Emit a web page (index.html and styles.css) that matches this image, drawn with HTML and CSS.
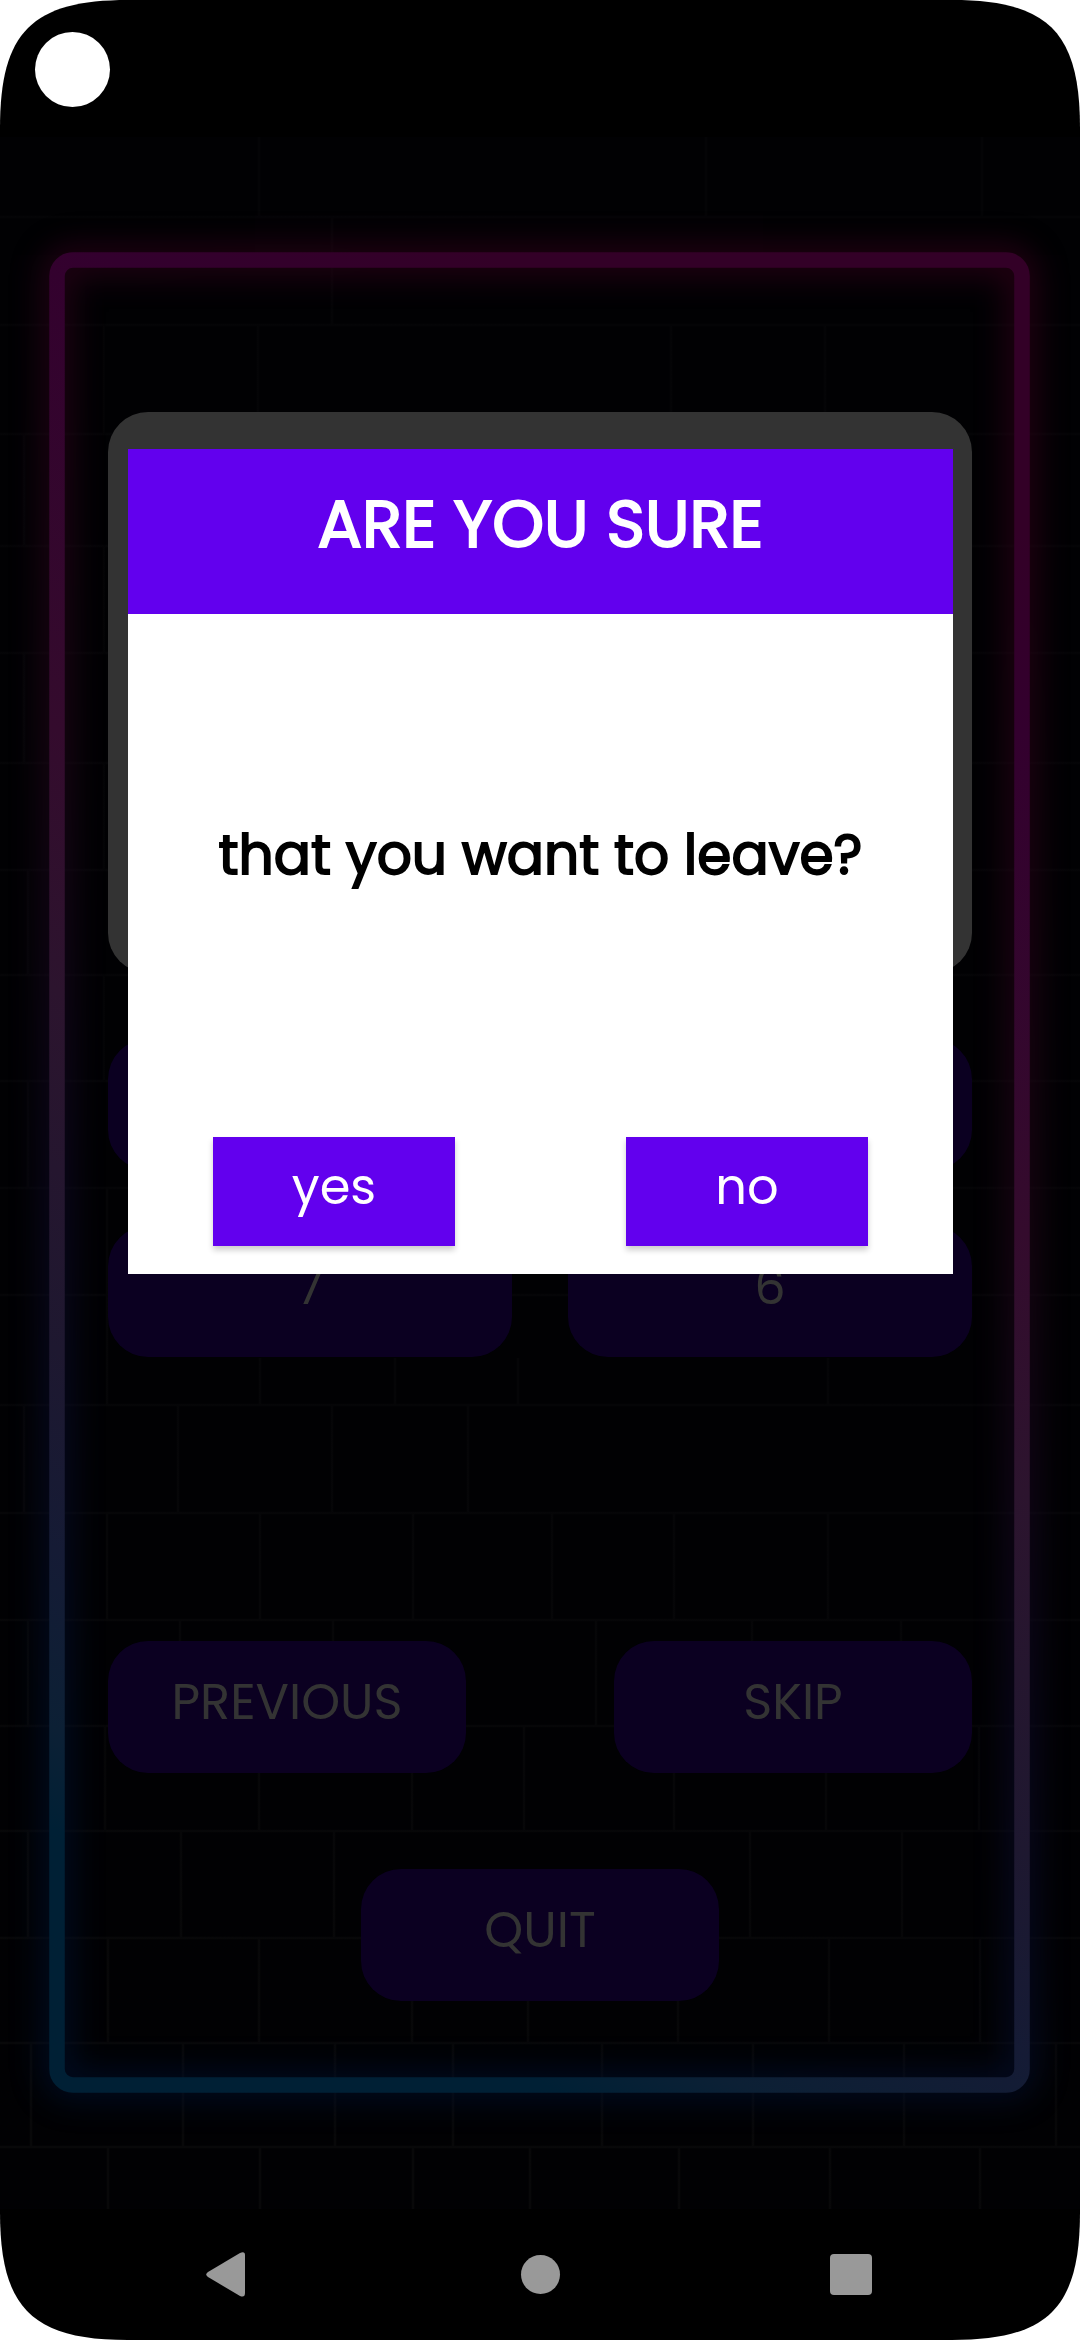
FILE: index.html
```html
<!DOCTYPE html>
<html lang="en">
<head>
<meta charset="utf-8">
<title>Quiz</title>
<link rel="stylesheet" href="styles.css">
</head>
<body>
<div class="device">
  <span class="camera"></span>
  <header class="statusbar"></header>
  <main class="screen">
    <svg class="wall" width="1080" height="2072" viewBox="0 137 1080 2072">
      <defs>
        <linearGradient id="neon" gradientUnits="userSpaceOnUse" x1="0" y1="0" x2="-819" y2="1575">
          <stop offset="0" stop-color="#330027"/>
          <stop offset=".1" stop-color="#33002e"/>
          <stop offset=".35" stop-color="#340b2d"/>
          <stop offset=".48" stop-color="#2c142e"/>
          <stop offset=".66" stop-color="#1e1830"/>
          <stop offset=".76" stop-color="#151b35"/>
          <stop offset=".85" stop-color="#0c2035"/>
          <stop offset=".9" stop-color="#002035"/>
        </linearGradient>
        <linearGradient id="aura" gradientUnits="userSpaceOnUse" x1="0" y1="0" x2="-819" y2="1575">
          <stop offset="0" stop-color="#33001a"/>
          <stop offset=".35" stop-color="#26061c"/>
          <stop offset=".6" stop-color="#0e0a2a"/>
          <stop offset=".85" stop-color="#00102e"/>
        </linearGradient>
        <linearGradient id="joint" gradientUnits="userSpaceOnUse" x1="800" y1="300" x2="200" y2="2100">
          <stop offset="0" stop-color="#040406"/>
          <stop offset=".6" stop-color="#050507"/>
          <stop offset="1" stop-color="#080809"/>
        </linearGradient>
        <filter id="glow" filterUnits="userSpaceOnUse" x="-60" y="130" width="1200" height="2090" color-interpolation-filters="sRGB"><feGaussianBlur stdDeviation="15"/></filter>
      </defs>
      <g class="mortar">
        <path d="M0 217H1080M0 325H1080M0 434H1080M0 546H1080M0 653H1080M0 763H1080M0 870H1080M0 975H1080M0 1081H1080M0 1188H1080M0 1295H1080M0 1405H1080M0 1513H1080M0 1620H1080M0 1726H1080M0 1831H1080M0 1938H1080M0 2043H1080M0 2147H1080"/>
        <path class="rows-a" d="M104 325V434M104 546V653M104 763V870M104 975V1081M107 1188V1405M107 1513V1620M105 1726V1831M108 1938V2043M108 2147V2209M176 325V325M260 137V137"/>
        <path d="M259 137V217M706 137V217M982 137V217M24 434V546M24 653V763M28 870V975M28 1081V1188M178 217V217M332 217V325"/>
        <path d="M176 325V325M258 325V434M671 325V434M825 325V434"/>
        <path d="M24 1405V1513M178 1405V1513M332 1405V1513M468 1405V1513M28 1620V1726M180 1620V1726M333 1620V1726M596 1620V1726M752 1620V1726M901 1620V1726"/>
        <path d="M260 1358V1405M395 1358V1405M518 1358V1405M828 1358V1405M260 1513V1620M413 1513V1620M552 1513V1620M674 1513V1620M828 1513V1620M259 1726V1831M412 1726V1831M524 1726V1831M674 1726V1831M826 1726V1831M979 1726V1831"/>
        <path d="M28 1831V1938M181 1831V1938M334 1831V1938M750 1831V1938M902 1831V1938M259 1938V2043M412 1938V2043M528 1938V2043M678 1938V2043M829 1938V2043M980 1938V2043"/>
        <path d="M31 2043V2147M183 2043V2147M335 2043V2147M453 2043V2147M602 2043V2147M753 2043V2147M904 2043V2147M1056 2043V2147M260 2147V2209M413 2147V2209M530 2147V2209M679 2147V2209M830 2147V2209M980 2147V2209"/>
      </g>
      <rect class="tube halo" x="57" y="260" width="965" height="1825" rx="16"/>
      <rect class="tube" x="57" y="260" width="965" height="1825" rx="16"/>
    </svg>
    <div class="quiz">
      <section class="question"></section>
      <div class="answers">
        <div class="pill"></div><div class="pill"></div>
        <div class="pill"><span>7</span></div><div class="pill"><span>6</span></div>
      </div>
      <div class="actions">
        <div class="pill"><span>PREVIOUS</span></div>
        <div class="pill"><span>SKIP</span></div>
      </div>
      <div class="exit"><div class="pill"><span>QUIT</span></div></div>
    </div>
    <div class="dialog" role="dialog">
      <h1 class="dialog-title">ARE YOU SURE</h1>
      <p class="dialog-text">that you want to leave?</p>
      <div class="dialog-buttons">
        <button>yes</button>
        <button>no</button>
      </div>
    </div>
  </main>
  <nav class="navbar">
    <svg width="1080" height="131" viewBox="0 0 1080 131" fill="#999">
      <path d="M208 63 L240 44 Q245 42 245 46 V84 Q245 89 240 87 L208 68 Q204.500 65.500 208 63Z"/>
      <circle cx="540.500" cy="65.500" r="19.500"/>
      <rect x="830" y="45" width="42" height="41" rx="4"/>
    </svg>
  </nav>
</div>
</body>
</html>
```
FILE: styles.css
```css
* { box-sizing: border-box; }
body { margin: 0; background: #fff; font-family: Poppins, Inter, sans-serif; }
h1, p { margin: 0; font-weight: 400; }
.device {
  position: relative;
  width: 1080px;
  height: 2340px;
  overflow: hidden;
  display: flex;
  flex-direction: column;
  background: #000;
  clip-path: path("M0 128C0 32 32 0 128 0H952C1048 0 1080 32 1080 128V2212C1080 2308 1048 2340 952 2340H128C32 2340 0 2308 0 2212Z");
}
.camera {
  position: absolute;
  left: 35px;
  top: 32px;
  width: 75px;
  height: 75px;
  border-radius: 50%;
  background: #fff;
}
.statusbar { height: 137px; flex: none; }
.screen { position: relative; height: 2072px; flex: none; background: #010103; }
.wall { position: absolute; left: 0; top: 0; }
.mortar { fill: none; stroke: url(#joint); stroke-width: 2.5; }
.tube { fill: none; stroke: url(#neon); stroke-width: 15.5px; }
.halo { stroke: url(#aura); stroke-width: 32px; filter: url(#glow); opacity: .65; }

.quiz { position: relative; padding: 275px 108px 0; }
.question { height: 561px; border-radius: 40px; background: #333; }
.answers {
  display: grid;
  grid-template-columns: 404px 404px;
  justify-content: space-between;
  row-gap: 56px;
  margin-top: 66px;
}
.pill {
  display: flex;
  align-items: center;
  justify-content: center;
  height: 132px;
  padding-bottom: 10px;
  border-radius: 40px;
  background: #0b0021;
  color: #333;
  font-size: 49.5px;
  line-height: 1;
}
.answers .pill { height: 131px; }
.actions { display: flex; justify-content: space-between; margin-top: 284px; }
.actions .pill, .exit .pill { width: 358px; }
.exit { display: flex; justify-content: center; margin-top: 96px; }

.dialog {
  position: absolute;
  left: 128px;
  top: 312px;
  width: 825px;
  height: 825px;
  display: flex;
  flex-direction: column;
  background: #fff;
}
.dialog-title {
  height: 165px;
  display: flex;
  align-items: center;
  justify-content: center;
  padding-bottom: 15px;
  background: #6200ee;
  color: #fff;
  font-size: 66px;
  white-space: nowrap;
  -webkit-text-stroke: 2px currentColor;
}
.dialog-text {
  flex: 1;
  display: flex;
  align-items: center;
  justify-content: center;
  padding-bottom: 42px;
  color: #000;
  font-size: 55px;
  white-space: nowrap;
  -webkit-text-stroke: 1.8px currentColor;
}
.dialog-buttons { display: flex; justify-content: space-between; padding: 0 85px 28px; }
.dialog-buttons button {
  width: 242px;
  height: 109px;
  padding: 0 0 10px;
  border: 0;
  background: #6200ee;
  color: #fff;
  font: 49.5px/1 Poppins, Inter, sans-serif;
  box-shadow: 0 4px 6px rgba(0,0,0,.2);
}
.navbar { height: 131px; flex: none; }
.navbar svg { display: block; }
```
